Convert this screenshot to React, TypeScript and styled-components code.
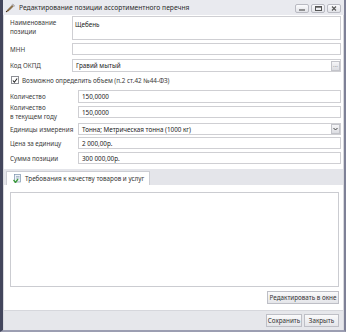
import * as React from 'react'
import styled, { createGlobalStyle } from 'styled-components'

const Global = createGlobalStyle`
  html, body {
    margin: 0;
    padding: 0;
    background: #ffffff;
  }
  * {
    box-sizing: border-box;
  }
`

const Window = styled.div`
  width: 346px;
  height: 332px;
  display: flex;
  flex-direction: column;
  background: #e8e9ee;
  border-left: 3px solid #43465c;
  border-right: 2px solid #7e8197;
  border-bottom: 2px solid #9c9eb2;
  font-family: 'Noto Sans', 'Open Sans', sans-serif;
  font-size: 6.3px;
  color: #3a3a3a;
`

const TitleBar = styled.div`
  height: 15px;
  flex: none;
  display: flex;
  align-items: center;
  padding: 0 3px 0 2px;
  background: #e9eaef;
`

const Title = styled.div`
  flex: 1;
  margin-left: 4px;
  font-size: 6.7px;
  color: #2b2b2b;
  white-space: nowrap;
`

const WinButtons = styled.div`
  display: flex;
  gap: 2px;
  padding-top: 2px;
`

const WinButton = styled.div`
  width: 14px;
  height: 9px;
  border: 1px solid #b9bac2;
  border-radius: 2px;
  background: linear-gradient(#fbfbfd, #e2e3e8);
  display: flex;
  align-items: center;
  justify-content: center;
`

const Body = styled.div`
  flex: 1;
  display: flex;
  flex-direction: column;
  background: #ffffff;
  border-left: 1px solid #d8d9de;
  border-right: 1px solid #d8d9de;
`

const Form = styled.div`
  display: flex;
  flex-direction: column;
  padding: 1px 2px 0 6px;
`

const Row = styled.div<{ $label: number; $mt?: number; $top?: boolean }>`
  display: grid;
  grid-template-columns: ${p => p.$label}px 1fr;
  align-items: ${p => (p.$top ? 'start' : 'center')};
  margin-top: ${p => p.$mt ?? 0}px;
`

const Label = styled.div<{ $pt?: number }>`
  line-height: 9px;
  padding-top: ${p => p.$pt ?? 0}px;
  color: #3c3c3c;
  white-space: nowrap;
  overflow: hidden;
`

const Input = styled.div<{ $h?: number }>`
  height: ${p => p.$h ?? 12}px;
  border: 1px solid #cfcfd3;
  background: #ffffff;
  display: flex;
  align-items: ${p => ((p.$h ?? 12) > 16 ? 'flex-start' : 'center')};
  padding: ${p => ((p.$h ?? 12) > 16 ? '3px 0 0 2px' : '0 0 0 3px')};
  line-height: 9px;
  color: #222;
  white-space: nowrap;
  overflow: hidden;
`

const InputText = styled.span`
  flex: 1;
`

const SideButton = styled.div`
  width: 9px;
  height: 10px;
  border: 1px solid #c3c4ca;
  background: linear-gradient(#f6f6f8, #dcdde2);
  display: flex;
  align-items: center;
  justify-content: center;
  font-size: 6px;
  line-height: 6px;
  color: #555;
`

const CheckRow = styled.label`
  display: flex;
  align-items: center;
  gap: 3px;
  margin-top: 3px;
  margin-left: 1px;
  height: 10px;
`

const CheckBox = styled.div`
  width: 8px;
  height: 8px;
  border: 1px solid #8e9096;
  background: #fff;
  display: flex;
  align-items: center;
  justify-content: center;
`

const TabStrip = styled.div`
  margin-top: 5px;
  height: 16px;
  flex: none;
  display: flex;
  align-items: flex-end;
  padding-left: 2px;
  background: #e4e5ea;
`

const Tab = styled.div`
  height: 14px;
  display: flex;
  align-items: center;
  gap: 3px;
  padding: 0 5px 0 6px;
  background: #ffffff;
  border: 1px solid #cdced4;
  border-bottom: none;
  white-space: nowrap;
  color: #333;
`

const TabPanel = styled.div`
  flex: 1;
  display: flex;
  flex-direction: column;
  padding: 7px 4px 6px 6px;
`

const Memo = styled.div`
  flex: 1;
  border: 1px solid #cbccd1;
`

const PanelActions = styled.div`
  display: flex;
  justify-content: flex-end;
  margin-top: 4px;
`

const Button = styled.div<{ $w: number }>`
  width: ${p => p.$w}px;
  height: 13px;
  border: 1px solid #bebfc6;
  background: linear-gradient(#fafafb, #e4e5e9);
  display: flex;
  align-items: center;
  justify-content: center;
  color: #333;
  white-space: nowrap;
`

const Footer = styled.div`
  height: 20px;
  flex: none;
  display: flex;
  align-items: center;
  justify-content: flex-end;
  gap: 2px;
  padding-right: 4px;
  background: #e6e7eb;
  border-top: 1px solid #d6d7dc;
`

const PenIcon = () => (
  <svg width="10" height="10" viewBox="0 0 10 10">
    <path d="M1 9 L3 6.5 L8 1.5 L9 2.5 L4 7.5 Z" fill="#9c7a4a" stroke="#5b4127" strokeWidth="0.6" />
    <path d="M7 1 L9.5 3.5" stroke="#b8b8c0" strokeWidth="1.4" />
    <path d="M1 9 L2.2 7.8" stroke="#3a2a18" strokeWidth="1" />
  </svg>
)

const TabIcon = () => (
  <svg width="9" height="9" viewBox="0 0 9 9">
    <rect x="1.5" y="0.5" width="6" height="7.5" fill="#eef3f8" stroke="#7d93ad" strokeWidth="0.7" />
    <path d="M3 2.5 H6.5 M3 4 H6.5" stroke="#7d93ad" strokeWidth="0.6" />
    <path d="M0.5 6 L2.5 8.5 L5 5" stroke="#3d9a3a" strokeWidth="1.3" fill="none" />
  </svg>
)

const Check = () => (
  <svg width="7" height="7" viewBox="0 0 7 7">
    <path d="M1 3.5 L2.8 5.5 L6 1.2" stroke="#222" strokeWidth="1.2" fill="none" />
  </svg>
)

const App = () => (
  <>
    <Global />
    <Window>
      <TitleBar>
        <PenIcon />
        <Title>Редактирование позиции ассортиментного перечня</Title>
        <WinButtons>
          <WinButton>
            <svg width="6" height="4" viewBox="0 0 6 4">
              <path d="M0 3 H6" stroke="#555" strokeWidth="1.2" />
            </svg>
          </WinButton>
          <WinButton>
            <svg width="7" height="5" viewBox="0 0 7 5">
              <rect x="0.5" y="0.5" width="6" height="4" fill="none" stroke="#555" strokeWidth="1" />
              <path d="M0.5 1.2 H6.5" stroke="#555" strokeWidth="1" />
            </svg>
          </WinButton>
          <WinButton>
            <svg width="6" height="5" viewBox="0 0 6 5">
              <path d="M1 0.5 L5 4.5 M5 0.5 L1 4.5" stroke="#555" strokeWidth="1.1" />
            </svg>
          </WinButton>
        </WinButtons>
      </TitleBar>
      <Body>
        <Form>
          <Row $label={62} $top>
            <Label $pt={2}>
              Наименование
              <br />
              позиции
            </Label>
            <Input $h={24}>Щебень</Input>
          </Row>
          <Row $label={62} $mt={3}>
            <Label>МНН</Label>
            <Input $h={12} />
          </Row>
          <Row $label={62} $mt={4}>
            <Label>Код ОКПД</Label>
            <Input $h={13}>
              <InputText>Гравий мытый</InputText>
              <SideButton>···</SideButton>
            </Input>
          </Row>
          <CheckRow>
            <CheckBox>
              <Check />
            </CheckBox>
            Возможно определить объем (п.2 ст.42 №44-ФЗ)
          </CheckRow>
          <Row $label={68} $mt={5}>
            <Label>Количество</Label>
            <Input $h={13}>150,0000</Input>
          </Row>
          <Row $label={68} $mt={0}>
            <Label>
              Количество
              <br />в текущем году
            </Label>
            <Input $h={12}>150,0000</Input>
          </Row>
          <Row $label={68} $mt={2}>
            <Label>Единицы измерения</Label>
            <Input $h={12}>
              <InputText>Тонна; Метрическая тонна (1000 кг)</InputText>
              <SideButton>
                <svg width="5" height="4" viewBox="0 0 5 4">
                  <path d="M0.5 1 L2.5 3 L4.5 1" stroke="#444" strokeWidth="1" fill="none" />
                </svg>
              </SideButton>
            </Input>
          </Row>
          <Row $label={68} $mt={2}>
            <Label>Цена за единицу</Label>
            <Input $h={12}>2 000,00р.</Input>
          </Row>
          <Row $label={68} $mt={3}>
            <Label>Сумма позиции</Label>
            <Input $h={12}>300 000,00р.</Input>
          </Row>
        </Form>
        <TabStrip>
          <Tab>
            <TabIcon />
            Требования к качеству товаров и услуг
          </Tab>
        </TabStrip>
        <TabPanel>
          <Memo />
          <PanelActions>
            <Button $w={72}>Редактировать в окне</Button>
          </PanelActions>
        </TabPanel>
        <Footer>
          <Button $w={36}>Сохранить</Button>
          <Button $w={35}>Закрыть</Button>
        </Footer>
      </Body>
    </Window>
  </>
)

export default App
